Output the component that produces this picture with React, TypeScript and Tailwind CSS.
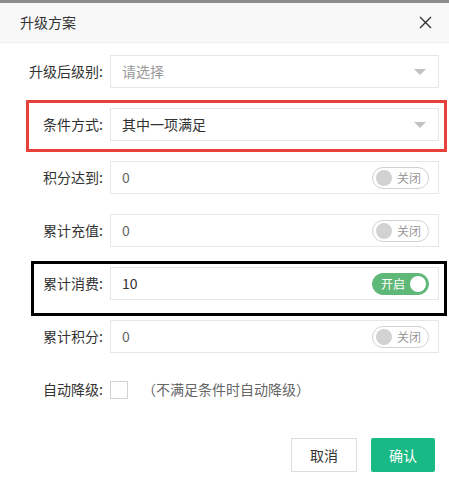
import React from 'react';

const font = { fontFamily: '"Noto Sans CJK SC", "Noto Sans", sans-serif' };

function Toggle({ on }: { on: boolean }) {
  if (on) {
    return (
      <div className="flex shrink-0 items-center justify-end h-[22px] w-[57px] rounded-full bg-[#5fb878] border border-[#5fb878] pr-[2px] gap-[5px]">
        <span className="text-[12px] leading-none text-white whitespace-nowrap">开启</span>
        <span className="shrink-0 w-[16px] h-[16px] rounded-full bg-white" />
      </div>
    );
  }
  return (
    <div className="flex shrink-0 items-center h-[22px] w-[57px] rounded-full bg-white border border-[#d2d2d2] pl-[3px] gap-[5px]">
      <span className="shrink-0 w-[16px] h-[16px] rounded-full bg-[#d2d2d2]" />
      <span className="text-[12px] leading-none text-[#999] whitespace-nowrap">关闭</span>
    </div>
  );
}

function Caret() {
  return (
    <span className="block w-0 h-0 mr-[3px] border-l-[6px] border-r-[6px] border-t-[6px] border-l-transparent border-r-transparent border-t-[#c2c2c2]" />
  );
}

function Row({
  label,
  children,
  mark,
}: {
  label: string;
  children: React.ReactNode;
  mark?: 'red' | 'black';
}) {
  return (
    <div className="relative flex items-center h-[33px]">
      {mark === 'red' && (
        <div className="absolute -top-[8px] -bottom-[11px] left-[26px] right-[2px] border-[3px] border-[#e8413c] pointer-events-none" />
      )}
      {mark === 'black' && (
        <div className="absolute -top-[6px] -bottom-[16px] left-[31px] right-[2px] border-[3px] border-black pointer-events-none" />
      )}
      <div className="w-[110px] pr-[7px] text-right text-[14px] text-[#333]">{label}</div>
      {children}
    </div>
  );
}

function Field({ value, tone, right }: { value: string; tone: string; right: React.ReactNode }) {
  return (
    <div className="relative w-[329px] h-[33px] border border-[#e6e6e6] bg-white flex items-center justify-between pl-[11px] pr-[9px]">
      <span className={`text-[14px] ${tone}`}>{value}</span>
      {right}
    </div>
  );
}

export default function App() {
  return (
    <div className="w-[449px] h-[481px] bg-white overflow-hidden" style={font}>
      <div className="h-[3px] bg-[#8c8c8c]" />
      <div className="h-[40px] bg-[#f8f8f8] border-b border-[#eee] flex items-center justify-between pl-[20px] pr-[17px]">
        <span className="text-[14px] text-[#333]">升级方案</span>
        <svg width="13" height="13" viewBox="0 0 13 13">
          <path d="M1 1 L12 12 M12 1 L1 12" stroke="#333" strokeWidth="1.4" />
        </svg>
      </div>

      <div className="flex flex-col gap-[20px] pt-[12px]">
        <Row label="升级后级别:">
          <Field value="请选择" tone="text-[#999]" right={<Caret />} />
        </Row>
        <Row label="条件方式:" mark="red">
          <Field value="其中一项满足" tone="text-[#333]" right={<Caret />} />
        </Row>
        <Row label="积分达到:">
          <Field value="0" tone="text-[#666]" right={<Toggle on={false} />} />
        </Row>
        <Row label="累计充值:">
          <Field value="0" tone="text-[#666]" right={<Toggle on={false} />} />
        </Row>
        <Row label="累计消费:" mark="black">
          <Field value="10" tone="text-[#333]" right={<Toggle on />} />
        </Row>
        <Row label="累计积分:">
          <Field value="0" tone="text-[#666]" right={<Toggle on={false} />} />
        </Row>
        <Row label="自动降级:">
          <span className="w-[18px] h-[18px] border border-[#d2d2d2] bg-white" />
          <span className="ml-[14px] text-[14px] text-[#666]">（不满足条件时自动降级）</span>
        </Row>
      </div>

      <div className="flex justify-end gap-[14px] pr-[14px] mt-[32px]">
        <button className="w-[66px] h-[34px] border border-[#ddd] bg-white text-[14px] text-[#333]">取消</button>
        <button className="w-[64px] h-[34px] rounded-[2px] bg-[#19b985] text-[14px] text-white">确认</button>
      </div>
    </div>
  );
}
